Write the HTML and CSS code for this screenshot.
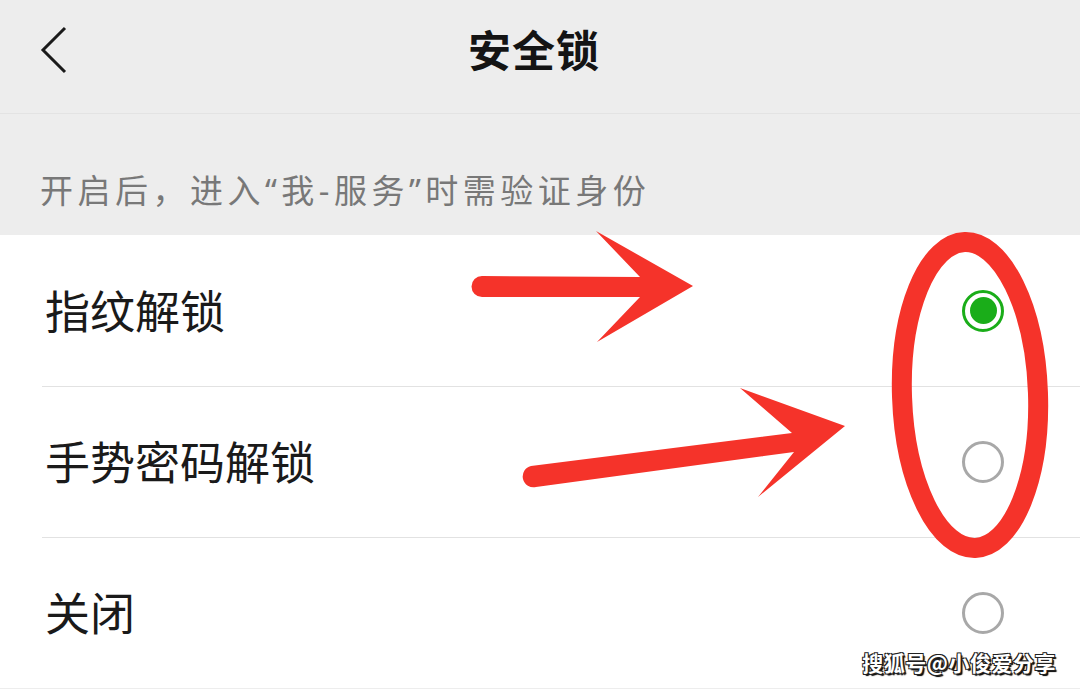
FILE: index.html
```html
<!DOCTYPE html>
<html lang="zh-CN">
<head>
<meta charset="utf-8">
<title>安全锁</title>
<link rel="stylesheet" href="styles.css">
</head>
<body>
<div class="page">
  <header class="topbar">
    <svg class="back" width="40" height="50" viewBox="0 0 40 50"><polyline points="25,3 3,25 25,47" fill="none" stroke="#1a1a1a" stroke-width="3" stroke-linejoin="miter"/></svg>
    <h1 class="title">安全锁</h1>
  </header>
  <div class="desc">开启后，进入“我-服务”时需验证身份</div>
  <ul class="list">
    <li class="row"><span class="label">指纹解锁</span><span class="radio checked"></span></li>
    <li class="row"><span class="label">手势密码解锁</span><span class="radio"></span></li>
    <li class="row"><span class="label">关闭</span><span class="radio"></span></li>
  </ul>
  <svg class="overlay" width="1080" height="689" viewBox="0 0 1080 689">
    <g fill="#f5332a" stroke="none">
      <path d="M482 276 L640 277 L596 231 L693 286 L597 342 L640 297 L482 297 A10.5 10.5 0 0 1 482 276 Z"/>
      <path d="M531 466 L792 433 L740 388 L845 426 L758 497 L794 452 L536 487 A10.5 10.5 0 0 1 531 466 Z"/>
    </g>
    <ellipse cx="970" cy="395" rx="68" ry="153" fill="none" stroke="#f5332a" stroke-width="20" transform="rotate(-2 970 395)"/>
  </svg>
  <div class="watermark">搜狐号@小俊爱分享</div>
</div>
</body>
</html>
```
FILE: styles.css
```css
* { box-sizing: border-box; margin: 0; padding: 0; }
html, body { width: 1080px; height: 689px; overflow: hidden; }
body {
  background: #ededed;
  font-family: "Noto Sans CJK SC", "Noto Sans", sans-serif;
}
.page {
  position: relative;
  width: 1080px;
  height: 689px;
  display: flex;
  flex-direction: column;
}
.topbar {
  height: 114px;
  flex: none;
  display: flex;
  align-items: center;
  justify-content: center;
  position: relative;
  border-bottom: 1px solid #e3e3e3;
}
.back {
  position: absolute;
  left: 40px;
  top: 25px;
}
.title {
  font-size: 43px;
  font-weight: 700;
  color: #141414;
  letter-spacing: 1px;
  margin-left: -12px;
  margin-top: -18px;
}
.desc {
  height: 121px;
  flex: none;
  padding: 52px 0 0 40px;
  font-family: "Noto Sans", "Noto Sans CJK SC", sans-serif;
  font-size: 33px;
  letter-spacing: 4.5px;
  color: #787878;
  line-height: 50px;
}
.list {
  list-style: none;
  background: #fff;
  flex: 1;
  border-bottom: 2px solid #ededed;
}
.row {
  height: 151px;
  display: flex;
  align-items: center;
  justify-content: space-between;
  padding: 0 76px 0 45px;
  position: relative;
}
.row + .row::before {
  content: "";
  position: absolute;
  left: 42px;
  right: 0;
  top: 0;
  height: 1px;
  background: #e2e2e2;
}
.label {
  font-size: 45px;
  color: #1a1a1a;
  line-height: 1;
  margin-top: -2px;
}
.radio {
  width: 42px;
  height: 42px;
  border-radius: 50%;
  border: 3px solid #a8a8a8;
  display: flex;
  align-items: center;
  justify-content: center;
}
.radio.checked {
  border-color: #1aad19;
}
.radio.checked::after {
  content: "";
  width: 27px;
  height: 27px;
  border-radius: 50%;
  background: #1aad19;
}
.overlay {
  position: absolute;
  left: 0;
  top: 0;
  pointer-events: none;
}
.watermark {
  position: absolute;
  right: 24px;
  bottom: 12px;
  font-size: 21px;
  font-weight: 700;
  color: #fff;
  letter-spacing: 0.5px;
  text-shadow: 1px 1px 0 #222, -1px -1px 0 #222, 1px -1px 0 #222, -1px 1px 0 #222, 2px 2px 1px #000;
}
```
